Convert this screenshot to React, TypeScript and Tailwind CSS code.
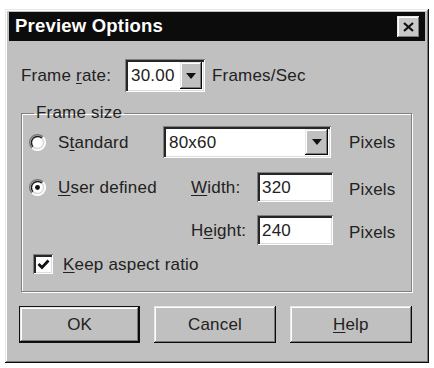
import React from "react";

const RAISED =
  "shadow-[inset_-1px_-1px_0_#0a0a0a,inset_1px_1px_0_#e8e8e8,inset_-2px_-2px_0_#7a7a7a,inset_2px_2px_0_#ffffff]";
const SUNKEN =
  "shadow-[inset_1px_1px_0_#808080,inset_-1px_-1px_0_#ffffff,inset_3px_3px_0_#262626,inset_-2px_-2px_0_#dcdcdc]";

function U({ children }: { children: React.ReactNode }) {
  return <span className="underline decoration-1 underline-offset-[2px]">{children}</span>;
}

function Radio({ checked }: { checked?: boolean }) {
  return (
    <svg width="17" height="17" viewBox="0 0 16 16" className="shrink-0">
      <circle cx="8" cy="8" r="7" fill="#ffffff" />
      <path d="M2.8 13.2 A7.3 7.3 0 0 1 13.2 2.8" fill="none" stroke="#7a7a7a" strokeWidth="1.4" />
      <path d="M13.2 2.8 A7.3 7.3 0 0 1 2.8 13.2" fill="none" stroke="#ffffff" strokeWidth="1.4" />
      <path d="M3.9 12.1 A5.8 5.8 0 0 1 12.1 3.9" fill="none" stroke="#1a1a1a" strokeWidth="1.4" />
      <path d="M12.1 3.9 A5.8 5.8 0 0 1 3.9 12.1" fill="none" stroke="#d8d8d8" strokeWidth="1.4" />
      {checked && <circle cx="8" cy="8" r="2.3" fill="#111111" />}
    </svg>
  );
}

function DropButton({ w, h }: { w: number; h: number }) {
  return (
    <div
      className={`bg-[#c0c0c0] flex items-center justify-center ${RAISED}`}
      style={{ width: w, height: h }}
    >
      <svg width="10" height="6" viewBox="0 0 10 6">
        <path d="M0 0 H10 L5 6 Z" fill="#111111" />
      </svg>
    </div>
  );
}

export default function App() {
  return (
    <div className="w-[434px] h-[368px] bg-white pt-[9px] pl-[5px] font-['Liberation_Sans',Arial,sans-serif] text-[17px] tracking-[0.2px] text-[#222222] leading-none">
      <div
        className={`w-[424px] h-[354px] bg-[#c0c0c0] pt-[3px] px-[4px] flex flex-col ${RAISED}`}
      >
        {/* Title bar */}
        <div className="h-[29px] bg-[#0c0c0c] flex items-center pl-[6px] pr-[5px]">
          <span className="text-white font-bold text-[18.5px] leading-none tracking-[0.2px]">
            Preview Options
          </span>
          <div
            className={`ml-auto w-[23px] h-[22px] bg-[#c8c8c8] flex items-center justify-center ${RAISED}`}
          >
            <svg width="11" height="10" viewBox="0 0 11 10">
              <path d="M1 1 L10 9 M10 1 L1 9" stroke="#111111" strokeWidth="2.2" />
            </svg>
          </div>
        </div>

        {/* Body */}
        <div className="pl-[12px] pr-[13px] flex flex-col">
          {/* Frame rate row */}
          <div className="mt-[18px] h-[33px] flex items-center">
            <div className="w-[104px]">
              Frame <U>r</U>ate:
            </div>
            <div className={`w-[80px] h-[33px] bg-white flex items-center pl-[6px] pr-[3px] ${SUNKEN}`}>
              <span className="flex-1">30.00</span>
              <DropButton w={22} h={27} />
            </div>
            <div className="ml-[7px]">Frames/Sec</div>
          </div>

          {/* Frame size group */}
          <fieldset className="mt-[12px] border border-[#808080] shadow-[1px_1px_0_#ffffff,inset_1px_1px_0_#ffffff] pl-[7px] pb-[16px]">
            <legend className="ml-[5px] px-[2px] leading-[18px]">Frame size</legend>

            {/* Standard */}
            <div className="mt-[4px] h-[32px] flex items-center">
              <div className="w-[134px] flex items-center">
                <Radio />
                <span className="ml-[12px]">
                  S<U>t</U>andard
                </span>
              </div>
              <div className={`w-[168px] h-[32px] bg-white flex items-center pl-[6px] pr-[3px] ${SUNKEN}`}>
                <span className="flex-1">80x60</span>
                <DropButton w={23} h={26} />
              </div>
              <div className="ml-[18px]">Pixels</div>
            </div>

            {/* User defined / Width */}
            <div className="mt-[14px] h-[30px] flex items-center">
              <div className="w-[162px] flex items-center">
                <Radio checked />
                <span className="ml-[12px]">
                  <U>U</U>ser defined
                </span>
              </div>
              <div className="w-[66px]">
                <U>W</U>idth:
              </div>
              <div className={`w-[76px] h-[30px] bg-white flex items-center pl-[5px] ${SUNKEN}`}>320</div>
              <div className="ml-[16px] mt-[4px]">Pixels</div>
            </div>

            {/* Height */}
            <div className="mt-[13px] h-[30px] flex items-center">
              <div className="w-[162px]" />
              <div className="w-[66px]">
                H<U>e</U>ight:
              </div>
              <div className={`w-[76px] h-[30px] bg-white flex items-center pl-[5px] ${SUNKEN}`}>240</div>
              <div className="ml-[16px] mt-[4px]">Pixels</div>
            </div>

            {/* Keep aspect ratio */}
            <div className="mt-[8px] h-[22px] flex items-center">
              <div className={`ml-[4px] w-[20px] h-[20px] bg-white flex items-center justify-center ${SUNKEN}`}>
                <svg width="13" height="11" viewBox="0 0 13 11">
                  <path d="M1.5 5 L5 8.5 L11.5 1.5" fill="none" stroke="#111111" strokeWidth="2.8" />
                </svg>
              </div>
              <span className="ml-[10px]">
                <U>K</U>eep aspect ratio
              </span>
            </div>
          </fieldset>

          {/* Buttons */}
          <div className="mt-[14px] -ml-[2px] flex gap-[14px]">
            <div className="w-[123px] h-[37px] border border-[#111111] bg-[#c0c0c0]">
              <div className={`w-full h-full flex items-center justify-center ${RAISED}`}>OK</div>
            </div>
            <div className={`w-[123px] h-[37px] bg-[#c0c0c0] flex items-center justify-center ${RAISED}`}>
              Cancel
            </div>
            <div className={`w-[124px] h-[37px] bg-[#c0c0c0] flex items-center justify-center ${RAISED}`}>
              <span>
                <U>H</U>elp
              </span>
            </div>
          </div>
        </div>
      </div>
    </div>
  );
}
